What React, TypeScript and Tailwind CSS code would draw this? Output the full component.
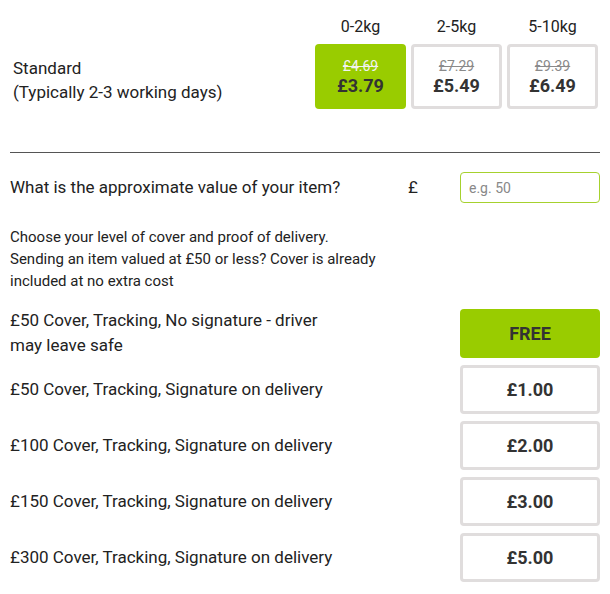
const weights = [
  { label: '0-2kg', was: '£4.69', now: '£3.79', active: true },
  { label: '2-5kg', was: '£7.29', now: '£5.49', active: false },
  { label: '5-10kg', was: '£9.39', now: '£6.49', active: false },
];

const covers = [
  { label: '£50 Cover, Tracking, No signature - driver may leave safe', price: 'FREE', active: true },
  { label: '£50 Cover, Tracking, Signature on delivery', price: '£1.00', active: false },
  { label: '£100 Cover, Tracking, Signature on delivery', price: '£2.00', active: false },
  { label: '£150 Cover, Tracking, Signature on delivery', price: '£3.00', active: false },
  { label: '£300 Cover, Tracking, Signature on delivery', price: '£5.00', active: false },
];

function App() {
  return (
    <div className="w-[610px] bg-white px-[10px] pt-[15px] font-['Roboto',sans-serif] text-[#222]">
      <div className="flex items-end">
        <div className="mb-[5px] pl-[3px] text-[17px] leading-[24px]">
          <p>Standard</p>
          <p>(Typically 2-3 working days)</p>
        </div>
        <div className="ml-auto mr-[2px] flex gap-[5px]">
          {weights.map(w => (
            <div key={w.label} className="flex w-[91px] flex-col items-center">
              <span className="mb-[5px] text-[16px] leading-[24px]">{w.label}</span>
              <div
                className={
                  w.active
                    ? 'flex h-[65px] w-full flex-col items-center justify-center rounded-[4px] bg-[#99cc00]'
                    : 'flex h-[65px] w-full flex-col items-center justify-center rounded-[4px] border-[3px] border-[#e0dddd] bg-white'
                }
              >
                <span
                  className={
                    w.active
                      ? 'text-[14px] leading-[18px] text-[#f2f2f2] line-through'
                      : 'text-[14px] leading-[18px] text-[#8a8a8a] line-through'
                  }
                >
                  {w.was}
                </span>
                <span className="text-[18px] font-bold leading-[22px] text-[#333]">{w.now}</span>
              </div>
            </div>
          ))}
        </div>
      </div>

      <hr className="mt-[43px] border-t border-[#555]" />

      <div className="mt-[19px] flex items-center">
        <span className="text-[17px]">What is the approximate value of your item?</span>
        <span className="ml-auto mr-[42px] text-[17px]">£</span>
        <input
          className="h-[31px] w-[140px] rounded-[4px] border border-[#a6d12e] px-[8px] text-[14px] text-[#222] outline-none placeholder:text-[#888]"
          placeholder="e.g. 50"
        />
      </div>

      <p className="mt-[23px] text-[15px] leading-[22px]">
        Choose your level of cover and proof of delivery.
        <br />
        Sending an item valued at £50 or less? Cover is already
        <br />
        included at no extra cost
      </p>

      <div className="mt-[16px] flex flex-col gap-[7px]">
        {covers.map(c => (
          <div key={c.price} className="flex items-center">
            <span className="w-[338px] text-[17px] leading-[25px]">{c.label}</span>
            <div
              className={
                c.active
                  ? 'ml-auto flex h-[49px] w-[140px] items-center justify-center rounded-[4px] bg-[#99cc00] text-[18px] font-bold text-[#333]'
                  : 'ml-auto flex h-[49px] w-[140px] items-center justify-center rounded-[4px] border-[3px] border-[#e0dddd] bg-white text-[18px] font-bold text-[#333]'
              }
            >
              {c.price}
            </div>
          </div>
        ))}
      </div>
    </div>
  );
}

export default App;
